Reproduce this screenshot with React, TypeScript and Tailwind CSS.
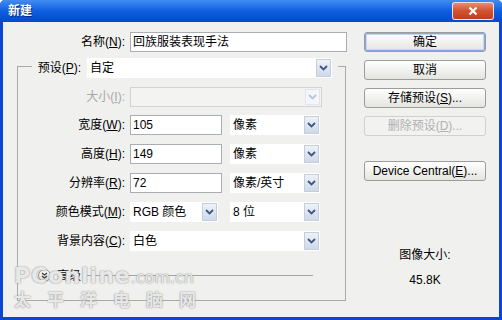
import React from "react";

const font = "font-['Liberation_Sans','Noto_Sans_CJK_SC',sans-serif]";

function Arrow({ disabled = false }: { disabled?: boolean }) {
  return (
    <div
      className={
        "w-[15px] h-full flex items-center justify-center border " +
        (disabled
          ? "border-[#e2e6ec] bg-[#f4f6f9]"
          : "border-[#c5cedb] bg-gradient-to-b from-[#eef2f8] to-[#cfd9e9]")
      }
    >
      <svg width="9" height="6" viewBox="0 0 9 6">
        <path
          d="M1 1 L4.5 4.5 L8 1"
          fill="none"
          stroke={disabled ? "#b7c4d9" : "#3f5685"}
          strokeWidth="1.8"
        />
      </svg>
    </div>
  );
}

function Select({
  text,
  w,
  disabled = false,
}: {
  text: string;
  w: string;
  disabled?: boolean;
}) {
  return (
    <div
      className={
        w +
        " h-[20px] flex items-stretch p-[1px] " +
        (disabled ? "bg-[#f3f3f1] border border-[#d2d2d0]" : "bg-white")
      }
    >
      <div className="flex-1 flex items-center pl-[2px] text-[12px] text-black whitespace-nowrap overflow-hidden">
        {text}
      </div>
      <Arrow disabled={disabled} />
    </div>
  );
}

function Input({ text, w }: { text: string; w: string }) {
  return (
    <div
      className={
        w +
        " h-[20px] bg-white border border-[#a9aeb3] flex items-center pl-[2px] text-[12px] text-black whitespace-nowrap"
      }
    >
      {text}
    </div>
  );
}

function Label({
  children,
  w,
  disabled = false,
}: {
  children: React.ReactNode;
  w: string;
  disabled?: boolean;
}) {
  return (
    <div
      className={
        w +
        " h-[20px] flex items-center justify-end text-[12px] whitespace-nowrap " +
        (disabled ? "text-[#a8a8a8]" : "text-black")
      }
    >
      {children}
    </div>
  );
}

function Btn({
  children,
  mt,
  def = false,
  disabled = false,
}: {
  children: React.ReactNode;
  mt: string;
  def?: boolean;
  disabled?: boolean;
}) {
  return (
    <div
      className={
        mt +
        " w-[122px] h-[20px] rounded-[3px] border flex items-center justify-center text-[12px] whitespace-nowrap " +
        (disabled
          ? "border-[#d0d0ce] bg-[#f2f2f0] text-[#b0b0b0]"
          : "border-[#9c9c9a] bg-gradient-to-b from-white to-[#e4e4e0] text-black") +
        (def ? " shadow-[inset_0_0_0_1px_#86a8e6,inset_0_0_0_2px_#c6d7f5]" : "")
      }
    >
      {children}
    </div>
  );
}

export default function App() {
  return (
    <div
      className={
        font +
        " w-[502px] h-[320px] flex flex-col bg-[#0a46d4] rounded-t-[5px] overflow-hidden relative"
      }
    >
      {/* Title bar */}
      <div className="h-[22px] bg-gradient-to-b from-[#3f8cf3] via-[#0d5fe0] to-[#0848cc] flex items-center pl-[8px] pr-[8px]">
        <span className="text-white font-bold text-[12px] [text-shadow:1px_1px_0_#0a2a8a]">
          新建
        </span>
        <div className="flex-1" />
        <div className="w-[42px] h-[18px] rounded-[3px] border border-white/80 bg-gradient-to-b from-[#e88a6e] via-[#d2512e] to-[#c0401e] flex items-center justify-center">
          <svg width="10" height="10" viewBox="0 0 10 10">
            <path d="M1.5 1.5 L8.5 8.5 M8.5 1.5 L1.5 8.5" stroke="white" strokeWidth="2.2" />
          </svg>
        </div>
      </div>

      {/* Body */}
      <div className="flex-1 mx-[3px] mb-[3px] bg-[#f0f0ee] flex relative">
        {/* Left column */}
        <div className="w-[346px] flex flex-col">
          <div className="mt-[10px] flex">
            <Label w="w-[122px]">
              名称(<u>N</u>):
            </Label>
            <div className="ml-[5px]">
              <Input text="回族服装表现手法" w="w-[217px]" />
            </div>
          </div>

          {/* Group box */}
          <div className="mt-[14px] ml-[14px] w-[329px] h-[235px] border border-[#a9a9a7] flex flex-col">
            <div className="-mt-[9px] flex">
              <div className="w-[14px]" />
              <div className="flex bg-[#f0f0ee] pr-[6px]">
                <Label w="w-[55px]">
                  <span className="w-full text-center">预设(<u>P</u>):</span>
                </Label>
                <Select text="自定" w="w-[245px]" />
              </div>
            </div>

            <div className="mt-[9px] flex">
              <Label w="w-[107px]" disabled>
                大小(<u>I</u>):
              </Label>
              <div className="ml-[5px]">
                <Select text="" w="w-[192px]" disabled />
              </div>
            </div>

            <div className="mt-[8px] flex">
              <Label w="w-[107px]">
                宽度(<u>W</u>):
              </Label>
              <div className="ml-[5px] flex gap-[8px]">
                <Input text="105" w="w-[92px]" />
                <Select text="像素" w="w-[90px]" />
              </div>
            </div>

            <div className="mt-[9px] flex">
              <Label w="w-[107px]">
                高度(<u>H</u>):
              </Label>
              <div className="ml-[5px] flex gap-[8px]">
                <Input text="149" w="w-[92px]" />
                <Select text="像素" w="w-[90px]" />
              </div>
            </div>

            <div className="mt-[9px] flex">
              <Label w="w-[107px]">
                分辨率(<u>R</u>):
              </Label>
              <div className="ml-[5px] flex gap-[8px]">
                <Input text="72" w="w-[92px]" />
                <Select text="像素/英寸" w="w-[90px]" />
              </div>
            </div>

            <div className="mt-[9px] flex">
              <Label w="w-[107px]">
                颜色模式(<u>M</u>):
              </Label>
              <div className="ml-[5px] flex gap-[12px]">
                <Select text="RGB 颜色" w="w-[88px]" />
                <Select text="8 位" w="w-[90px]" />
              </div>
            </div>

            <div className="mt-[9px] flex">
              <Label w="w-[107px]">
                背景内容(<u>C</u>):
              </Label>
              <div className="ml-[5px]">
                <Select text="白色" w="w-[190px]" />
              </div>
            </div>

            <div className="mt-[18px] flex items-center h-[13px]">
              <div className="ml-[20px] w-[13px] h-[13px] rounded-full border border-[#8c8c8c] bg-gradient-to-b from-white to-[#d6d6d4] flex items-center justify-center">
                <svg width="7" height="7" viewBox="0 0 7 7">
                  <path d="M1 1 L3.5 3 L6 1 M1 4 L3.5 6 L6 4" fill="none" stroke="#333" strokeWidth="1.1" />
                </svg>
              </div>
              <span className="ml-[6px] text-[12px] text-black">高级</span>
              <div className="ml-[5px] w-[227px] h-px bg-[#a3a3a1]" />
            </div>
          </div>
        </div>

        {/* Right column */}
        <div className="ml-[15px] flex flex-col">
          <Btn mt="mt-[10px]" def>
            确定
          </Btn>
          <Btn mt="mt-[8px]">取消</Btn>
          <Btn mt="mt-[8px]">
            存储预设(<u>S</u>)...
          </Btn>
          <Btn mt="mt-[8px]" disabled>
            删除预设(<u>D</u>)...
          </Btn>
          <Btn mt="mt-[25px]">
            Device Central(<u>E</u>)...
          </Btn>
          <div className="mt-[65px] text-center text-[12px] text-black">图像大小:</div>
          <div className="mt-[7px] text-center text-[12px] text-black">45.8K</div>
        </div>

        {/* Watermark */}
        <div className="absolute left-[11px] top-[243px] pointer-events-none text-white/80 [text-shadow:0_0_1px_#888,0_0_2px_#aaa]">
          <div className="flex items-baseline leading-none font-['DejaVu_Sans',sans-serif]">
            <span className="text-[22px] font-bold tracking-[1px]">PConline</span>
            <span className="text-[16px]">.com.cn</span>
          </div>
          <div className="mt-[3px] flex gap-[16px] text-[17px] leading-none font-['Noto_Sans_CJK_SC',sans-serif] font-bold">
            <span>太</span>
            <span>平</span>
            <span>洋</span>
            <span>电</span>
            <span>脑</span>
            <span>网</span>
          </div>
        </div>
      </div>
    </div>
  );
}
